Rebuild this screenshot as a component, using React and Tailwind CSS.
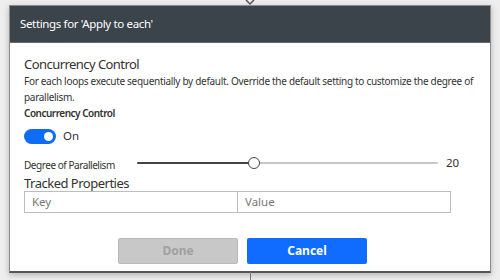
export default function App() {
  const font = { fontFamily: '"Noto Sans", "Open Sans", sans-serif' };
  return (
    <div className="relative w-[500px] h-[280px] bg-[#eeeeee] overflow-hidden" style={font}>
      {/* top connector arrow */}
      <svg className="absolute left-[244px] top-0" width="12" height="6" viewBox="0 0 12 6">
        <path d="M2 0 L6 4 L10 0" fill="none" stroke="#555" strokeWidth="1.5" />
      </svg>
      {/* bottom connector */}
      <div className="absolute left-[250px] top-[272px] w-px h-[8px] bg-[#777]" />
      <div className="pt-[5px] pl-[9px]">
        <div className="w-[482px] h-[268px] bg-white border border-[#8c8c8c] border-b-2 border-b-[#555] shadow-[0_2px_6px_rgba(0,0,0,0.25)] flex flex-col">
          <div className="h-[37px] shrink-0 bg-[#3b434b] flex items-center pl-[10px] text-white text-[11.5px] tracking-[-0.35px] border-b border-[#6b6b6b]">
            Settings for 'Apply to each'
          </div>
          <div className="pl-[14px] pt-[12px] flex flex-col text-[#323130]">
            <div className="text-[13px] tracking-[-0.55px] leading-[18px]">Concurrency Control</div>
            <div className="text-[10px] tracking-[-0.3px] leading-[15.5px] mt-[1px] text-[#333] w-[462px]">
              For each loops execute sequentially by default. Override the default setting to customize the degree of parallelism.
            </div>
            <div className="text-[10px] tracking-[-0.5px] font-semibold leading-[16px]">Concurrency Control</div>
            <div className="flex items-center mt-[7px] h-[16px]">
              <div className="w-[32px] h-[15px] rounded-full bg-[#0f6cf5] flex items-center justify-end pr-[3px]">
                <div className="w-[9px] h-[9px] rounded-full bg-white" />
              </div>
              <span className="ml-[7px] text-[11.5px]">On</span>
            </div>
            <div className="flex items-center mt-[11px] h-[16px]">
              <span className="text-[10px] tracking-[-0.45px] w-[113px] pt-[4px]">Degree of Parallelism</span>
              <div className="relative w-[301px] h-[14px] flex items-center">
                <div className="h-[2px] w-[117px] bg-[#444] rounded-l" />
                <div className="h-[2px] flex-1 bg-[#c8c8c8] rounded-r" />
                <div className="absolute left-[111px] top-[1px] w-[12px] h-[12px] rounded-full bg-white border-[1.5px] border-[#444]" />
              </div>
              <span className="ml-[8px] text-[11.5px]">20</span>
            </div>
            <div className="text-[13px] tracking-[-0.5px] leading-[18px] mt-[3px]">Tracked Properties</div>
            <div className="flex -mt-px">
              <div className="w-[214px] h-[22px] border border-[#bdbdbd] flex items-center pl-[7px] text-[11.5px] text-[#777]">Key</div>
              <div className="w-[214px] h-[22px] border border-[#bdbdbd] -ml-px flex items-center pl-[7px] text-[11.5px] text-[#777]">Value</div>
            </div>
            <div className="flex gap-[9px] mt-[25px] ml-[94px]">
              <div className="w-[120px] h-[26px] bg-[#c8c8c8] border border-[#b8b8b8] rounded-[2px] flex items-center justify-center text-[12px] font-bold text-[#a0a0a0]">Done</div>
              <div className="w-[120px] h-[26px] bg-[#0f6cff] rounded-[2px] flex items-center justify-center text-[12px] font-bold text-white">Cancel</div>
            </div>
          </div>
        </div>
      </div>
    </div>
  );
}
